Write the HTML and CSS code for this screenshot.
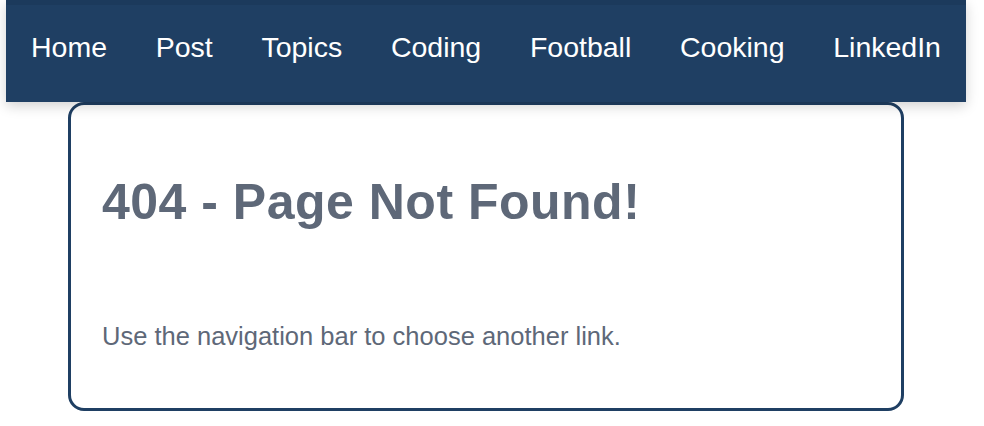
FILE: index.html
```html
<!DOCTYPE html>
<html>
<head>
<meta charset="utf-8">
<link rel="stylesheet" href="styles.css">
</head>
<body>
<div class="page">
  <nav class="nav">
    <a href="#">Home</a>
    <a href="#">Post</a>
    <a href="#">Topics</a>
    <a href="#">Coding</a>
    <a href="#">Football</a>
    <a href="#">Cooking</a>
    <a href="#">LinkedIn</a>
  </nav>
  <main class="card">
    <h1 class="title">404 - Page Not Found!</h1>
    <p class="text">Use the navigation bar to choose another link.</p>
  </main>
</div>
</body>
</html>
```
FILE: styles.css
```css
html, body {
  margin: 0;
  padding: 0;
  background: #ffffff;
  font-family: "Liberation Sans", Arial, sans-serif;
}
.page {
  width: 972px;
}
.nav {
  width: 910px;
  height: 69px;
  margin: 0 auto;
  border-top: 5px solid #1c3a5c;
  background: #1f3f63;
  box-shadow: 0 4px 12px rgba(0, 0, 0, 0.18);
  display: flex;
  align-items: flex-start;
  justify-content: space-between;
  padding: 28px 25px 0;
  position: relative;
  z-index: 1;
}
.nav a {
  color: #ffffff;
  text-decoration: none;
  font-size: 28.5px;
  line-height: 1;
}
.card {
  width: 836px;
  height: 309px;
  margin: 0 auto;
  border: 3px solid #1f3f63;
  border-radius: 16px;
  padding: 0 31px;
  box-sizing: border-box;
}
.title {
  margin: 71.5px 0 0;
  font-size: 50px;
  line-height: 1;
  font-weight: bold;
  letter-spacing: 0.5px;
  color: #5e6878;
}
.text {
  margin: 97px 0 0;
  font-size: 25.5px;
  line-height: 1;
  color: #5e6878;
}
```
